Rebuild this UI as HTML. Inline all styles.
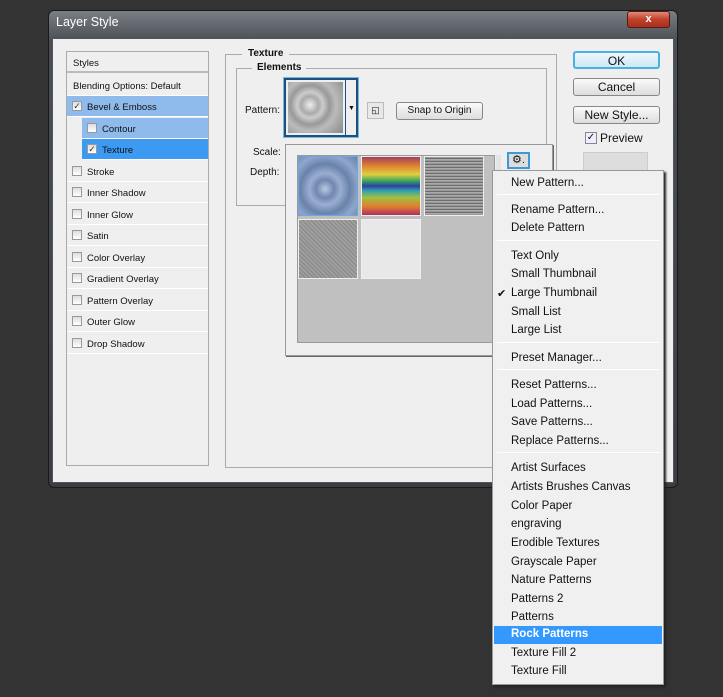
<!DOCTYPE html>
<html><head><style>
*{margin:0;padding:0;box-sizing:border-box}
body{width:723px;height:697px;background:#333;position:relative;overflow:hidden;font-family:"Liberation Sans",sans-serif;font-size:10px;color:#111}
.a{position:absolute}
.win{left:48px;top:10px;width:630px;height:478px;border-radius:6px;background:linear-gradient(#7a7f85,#4a4f55 30px,#3a3e44);border:1px solid #1a1a1a}
.inner{left:52px;top:38px;width:622px;height:445px;background:#efefef;border:1px solid #555}
.row{position:absolute;left:67px;width:141px;height:21px;border-bottom:1px solid #fff;padding-left:20px;line-height:23px;font-size:9.5px}
.cb{position:absolute;width:10px;height:10px;border:1px solid #999;background:linear-gradient(#ddd,#fff);top:5px;left:5px;font-size:9px;line-height:8px;color:#333;text-align:center}
.btn{position:absolute;border:1px solid #888;border-radius:3px;background:linear-gradient(#fafafa,#ddd);text-align:center;font-size:12px;line-height:16px}
.mi{position:absolute;left:511px;font-size:11.5px;color:#111;margin-top:2px}
.sep{position:absolute;left:497px;width:162px;height:1px;background:#aaa;border-bottom:1px solid #fff}
.th{position:absolute;width:60px;height:60px;border:1px solid #eee}
</style></head><body>
<div class="a win"></div>
<div class="a" style="left:56px;top:15px;color:#fff;font-size:12.5px">Layer Style</div>
<div class="a" style="left:627px;top:11px;width:43px;height:17px;border-radius:3px;background:linear-gradient(#e08a78,#c0402a 50%,#a8301e);border:1px solid #5a1a10;color:#fff;text-align:center;font-weight:bold;font-size:11px;line-height:15px">x</div>
<div class="a inner"></div>
<div class="a" style="left:66px;top:51px;width:143px;height:415px;border:1px solid #aaa;background:#efefef"></div>
<div class="row" style="top:52px;padding-left:6px;border-bottom:2px solid #bbb">Styles</div>
<div class="row" style="top:75px;padding-left:6px">Blending Options: Default</div>
<div class="row" style="top:96px;background:#8ebbec"><span class="cb">✓</span>Bevel &amp; Emboss</div>
<div class="row" style="top:118px;left:82px;width:126px;background:#8ebbec"><span class="cb">&nbsp;</span>Contour</div>
<div class="row" style="top:139px;left:82px;width:126px;background:#3d9af2"><span class="cb">✓</span>Texture</div>
<div class="row" style="top:161px"><span class="cb"></span>Stroke</div>
<div class="row" style="top:182px"><span class="cb"></span>Inner Shadow</div>
<div class="row" style="top:204px"><span class="cb"></span>Inner Glow</div>
<div class="row" style="top:225px"><span class="cb"></span>Satin</div>
<div class="row" style="top:247px"><span class="cb"></span>Color Overlay</div>
<div class="row" style="top:268px"><span class="cb"></span>Gradient Overlay</div>
<div class="row" style="top:290px"><span class="cb"></span>Pattern Overlay</div>
<div class="row" style="top:311px"><span class="cb"></span>Outer Glow</div>
<div class="row" style="top:333px"><span class="cb"></span>Drop Shadow</div>
<div class="a" style="left:225px;top:54px;width:332px;height:414px;border:1px solid #aaa"></div>
<div class="a" style="left:242px;top:48px;padding:0 6px;background:#efefef;font-weight:bold;font-size:10px">Texture</div>
<div class="a" style="left:236px;top:68px;width:311px;height:138px;border:1px solid #aaa"></div>
<div class="a" style="left:252px;top:62px;padding:0 5px;background:#efefef;font-weight:bold;font-size:10px">Elements</div>
<div class="a" style="left:245px;top:105px">Pattern:</div>
<div class="a" style="left:253px;top:147px">Scale:</div>
<div class="a" style="left:250px;top:167px">Depth:</div>
<div class="a" style="left:284px;top:78px;width:74px;height:59px;border:2px solid #1d4e86;box-shadow:0 0 0 1px #7bc"></div>
<div class="a" style="left:288px;top:82px;width:55px;height:51px;background:radial-gradient(circle at 40% 45%,#eee 0,#aaa 20%,#ccc 30%,#999 45%,#bbb 60%,#888 100%)"></div>
<div class="a" style="left:345px;top:80px;width:1px;height:55px;background:#1d4e86"></div>
<div class="a" style="left:348px;top:105px;font-size:7px">▼</div>
<div class="a" style="left:367px;top:102px;width:17px;height:17px;border:1px solid #bbb;background:#e8e8e8;font-size:9px;text-align:center;line-height:15px">◱</div>
<div class="btn" style="left:396px;top:102px;width:87px;height:18px;font-size:10px">Snap to Origin</div>
<div class="a" style="left:285px;top:144px;width:268px;height:212px;background:#efefef;border:1px solid #999;box-shadow:1px 1px 0 #666"></div>
<div class="a" style="left:297px;top:155px;width:198px;height:188px;background:#c0c0c0;border:1px solid #999"></div>
<div class="a" style="left:496px;top:155px;width:5px;height:188px;background:#e4e4e4"></div>
<div class="th" style="left:298px;top:156px;border:1px solid #6fa8e0;background:radial-gradient(circle at 45% 55%,#b8c8e4 0,#7088b0 20%,#9aaed0 35%,#6a82aa 55%,#90a6cc 75%,#6880a8 100%)"></div>
<div class="th" style="left:361px;top:156px;background:linear-gradient(#a04060,#e08030 15%,#e0d040 30%,#30a060 42%,#3040a0 50%,#30a0b0 58%,#a0c040 70%,#e08030 85%,#b03060)"></div>
<div class="th" style="left:424px;top:156px;background:repeating-linear-gradient(#9a9a9a 0 1px,#6e6e6e 1px 2px,#aaa 2px 3px)"></div>
<div class="th" style="left:298px;top:219px;background:repeating-linear-gradient(45deg,#999 0 1px,#888 1px 2px,#a4a4a4 2px 3px)"></div>
<div class="th" style="left:361px;top:219px;background:#e8e8e8"></div>
<div class="a" style="left:507px;top:152px;width:23px;height:17px;border:2px solid #3c9ad8;background:#ddd;font-size:11px;line-height:13px;text-align:center">⚙.</div>
<div class="btn" style="left:573px;top:51px;width:87px;height:18px;border:2px solid #4ab0e0;background:linear-gradient(#eef8fc,#cde8f4)">OK</div>
<div class="btn" style="left:573px;top:78px;width:87px;height:18px">Cancel</div>
<div class="btn" style="left:573px;top:106px;width:87px;height:18px">New Style...</div>
<div class="a" style="left:585px;top:132px;width:12px;height:12px;border:1px solid #888;background:#eef;font-size:10px;line-height:10px;text-align:center">✓</div>
<div class="a" style="left:600px;top:131px;font-size:12px">Preview</div>
<div class="a" style="left:583px;top:152px;width:65px;height:20px;background:#ddd;border:1px solid #ccc"></div>
<div class="a" style="left:492px;top:170px;width:172px;height:515px;background:#f0f0f0;border:1px solid #999;box-shadow:2px 2px 2px #222"></div>
<div class="a" style="left:494px;top:626px;width:168px;height:18px;background:#3399ff"></div>
<div class="mi" style="top:175px">New Pattern...</div>
<div class="sep" style="top:194px"></div>
<div class="mi" style="top:202px">Rename Pattern...</div>
<div class="mi" style="top:220px">Delete Pattern</div>
<div class="sep" style="top:240px"></div>
<div class="mi" style="top:248px">Text Only</div>
<div class="mi" style="top:266px">Small Thumbnail</div>
<div class="mi" style="top:285px">Large Thumbnail</div>
<div class="a" style="left:497px;top:287px;font-size:11px">✔</div>
<div class="mi" style="top:304px">Small List</div>
<div class="mi" style="top:322px">Large List</div>
<div class="sep" style="top:342px"></div>
<div class="mi" style="top:350px">Preset Manager...</div>
<div class="sep" style="top:369px"></div>
<div class="mi" style="top:377px">Reset Patterns...</div>
<div class="mi" style="top:396px">Load Patterns...</div>
<div class="mi" style="top:414px">Save Patterns...</div>
<div class="mi" style="top:433px">Replace Patterns...</div>
<div class="sep" style="top:452px"></div>
<div class="mi" style="top:460px">Artist Surfaces</div>
<div class="mi" style="top:479px">Artists Brushes Canvas</div>
<div class="mi" style="top:498px">Color Paper</div>
<div class="mi" style="top:516px">engraving</div>
<div class="mi" style="top:535px">Erodible Textures</div>
<div class="mi" style="top:554px">Grayscale Paper</div>
<div class="mi" style="top:572px">Nature Patterns</div>
<div class="mi" style="top:591px">Patterns 2</div>
<div class="mi" style="top:609px">Patterns</div>
<div class="mi" style="top:626px;color:#fff;font-weight:bold">Rock Patterns</div>
<div class="mi" style="top:645px">Texture Fill 2</div>
<div class="mi" style="top:663px">Texture Fill</div>
</body></html>
